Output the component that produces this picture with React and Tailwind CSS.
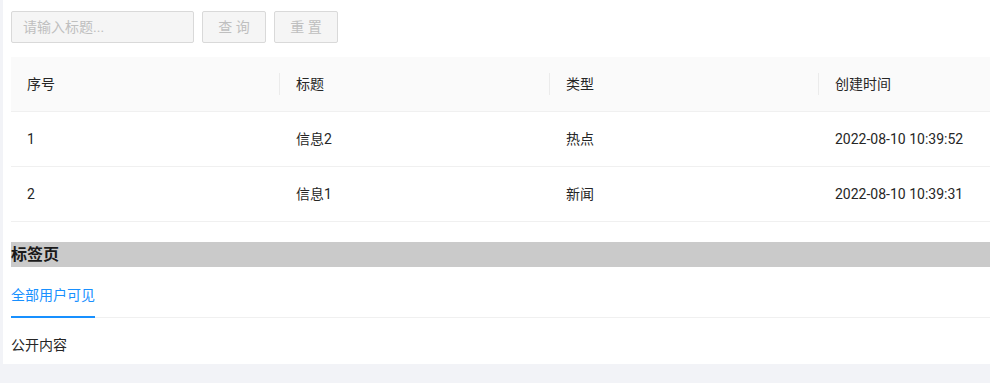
export default function App() {
  const font = { fontFamily: 'Roboto, "Noto Sans CJK SC", sans-serif' };
  const rows = [
    ["1", "信息2", "热点", "2022-08-10 10:39:52"],
    ["2", "信息1", "新闻", "2022-08-10 10:39:31"],
  ];
  const heads = ["序号", "标题", "类型", "创建时间"];
  return (
    <div className="min-h-[383px] bg-[#f2f3f7] pl-[3px] text-[14px] text-[#262626]" style={font}>
      <div className="bg-white pl-2 pt-[11px] pb-2">
        <div className="flex gap-2 mb-[14px]">
          <div className="w-[183px] h-8 border border-[#d9d9d9] rounded-[2px] bg-[#f5f5f5] px-[11px] flex items-center text-[#bfbfbf]">
            请输入标题...
          </div>
          <div className="w-16 h-8 border border-[#d9d9d9] rounded-[2px] bg-[#f5f5f5] flex items-center justify-center text-[#bfbfbf]">
            查 询
          </div>
          <div className="w-16 h-8 border border-[#d9d9d9] rounded-[2px] bg-[#f5f5f5] flex items-center justify-center text-[#bfbfbf]">
            重 置
          </div>
        </div>
        <div className="grid grid-cols-[269px_270px_269px_1fr]">
          {heads.map((h, i) => (
            <div key={h} className="relative bg-[#fafafa] border-b border-[#f0f0f0] px-4 py-4 leading-[22px]">
              {h}
              {i < 3 && <div className="absolute right-0 top-1/2 -translate-y-1/2 w-px h-[22px] bg-[#ebebeb]" />}
            </div>
          ))}
          {rows.map((r) =>
            r.map((c, j) => (
              <div key={r[0] + j} className="border-b border-[#f0f0f0] px-4 py-4 leading-[22px]">
                {c}
              </div>
            ))
          )}
        </div>
        <div className="mt-5 h-[25px] leading-[25px] bg-[#cacaca] text-[16px] font-bold text-[#1a1a1a]">标签页</div>
        <div className="mt-[5px] flex border-b border-[#f0f0f0] mb-4">
          <div className="relative pt-3 pb-[11px] leading-[22px] text-[#1890ff]">
            全部用户可见
            <div className="absolute left-0 right-0 bottom-[-1px] h-[2px] bg-[#1890ff]" />
          </div>
        </div>
        <div className="leading-[22px]">公开内容</div>
      </div>
    </div>
  );
}
